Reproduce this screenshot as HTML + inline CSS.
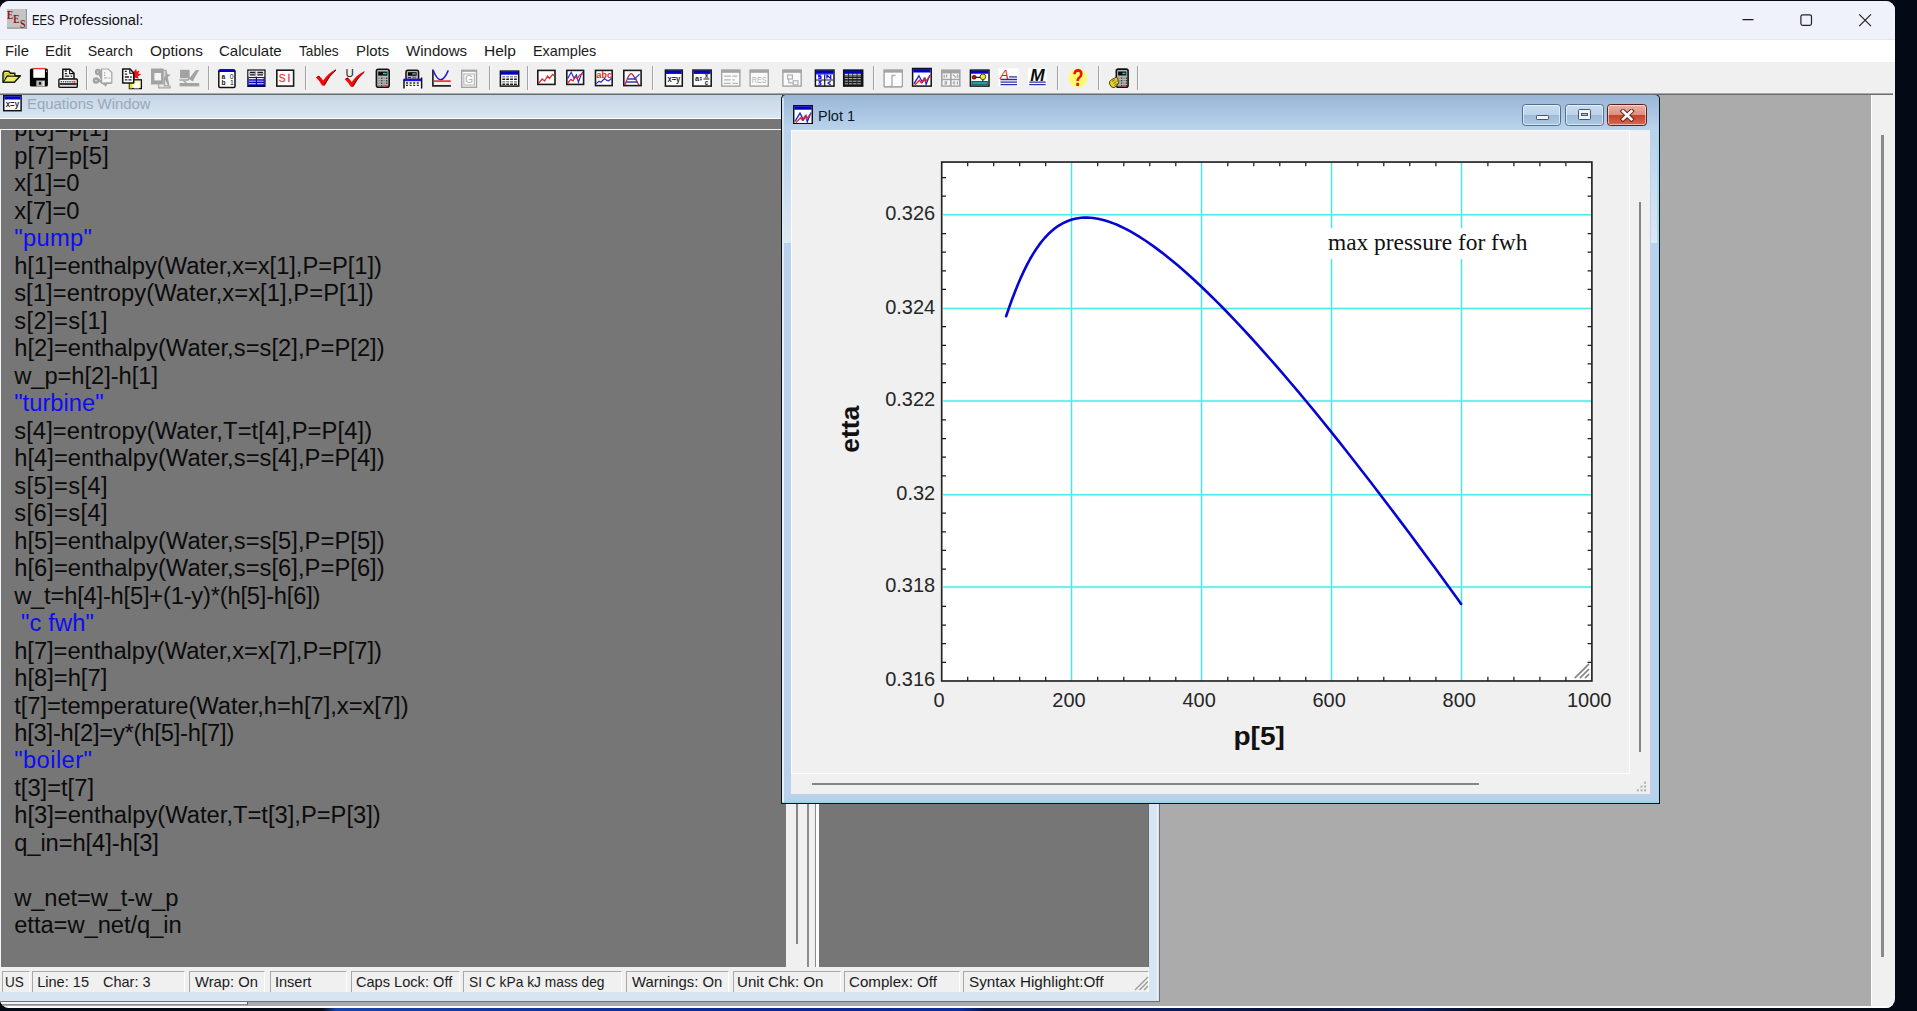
<!DOCTYPE html>
<html lang="en">
<head>
<meta charset="utf-8">
<title>EES Professional</title>
<style>
*{box-sizing:border-box;margin:0;padding:0}
html,body{width:1917px;height:1011px;overflow:hidden}
body{background:#040a15;font-family:"Liberation Sans",sans-serif;position:relative;color:#000}
div,span,svg,pre{position:absolute}
.lbl{white-space:pre;display:inline-block;transform-origin:0 50%}
#desk{left:0;top:1004px;width:1917px;height:7px;background:linear-gradient(90deg,#040a15 0,#040a15 322px,#1743a8 336px,#0e2f9a 600px,#0a2690 800px,#0c2c9c 960px,#06154e 985px,#081c60 1150px,#050f35 1300px,#071a58 1420px,#040a15 1500px)}
#win{left:0;top:1px;width:1895px;height:1007px;background:#f0f0f0;border-radius:9px 9px 9px 9px;overflow:hidden}
#tbar{left:0;top:0;width:1895px;height:39px;background:#eff2fa;border-bottom:1px solid #e4e6ec}
#mbar{left:0;top:39px;width:1895px;height:21.6px;background:#fff}
#tools{left:0;top:60.6px;width:1895px;height:31.4px;background:#f0f0f0}
#tline{left:0;top:91.6px;width:1893px;height:2.8px;background:linear-gradient(#d2d2d2,#8d9194 40%,#5c6368 85%,#687078);z-index:2}
#mdi{left:0;top:94px;width:1871px;height:911px;background:#ababab;overflow:hidden}
#vsb{left:1871px;top:94px;width:22px;height:913px;background:#f0f0f0;border-left:1px solid #fff}
#vsb i{position:absolute;left:9.2px;top:40px;width:3px;height:822px;background:#8a8a8a}
#hthumb{left:0;top:1000.6px;width:247.5px;height:3.4px;background:#f4f4f6;border-right:1.4px solid #5a5a5a;border-bottom:1px solid #8a8a8a;z-index:3}
#wbot{left:0;top:1005px;width:1895px;height:2px;background:#fdfdfd}
.sep{top:4.8px;width:2px;height:23.4px;background:#a3a3a3;border-right:1px solid #f8f8f8}


#eq{left:0;top:0;width:1159.7px;height:906.8px;background:#d7e4f1;border-right:1.4px solid #6e6e6e;border-bottom:1.6px solid #707070;overflow:hidden}
#eq:after{content:"";position:absolute;left:1157px;top:24px;width:1.3px;height:881px;background:#eaf1f8}
#eqtitle{left:0;top:0;width:1160px;height:23.2px;background:linear-gradient(#c6d5e5,#d9e6f2)}
#eqclient{left:0;top:23.2px;width:1148.9px;height:873.8px;background:#767676;border-top:1.2px solid #fff;overflow:hidden}
#eqtext{left:0;top:9.5px;width:786px;height:838.5px;background:#767676;border-top:1.3px solid #f4f4f4;border-left:1.5px solid #f4f4f4;overflow:hidden}
#eqtext pre{font-family:"Liberation Sans",sans-serif;color:#0b0b0b;white-space:pre}
#eqtext pre span{position:static}
#eqtext .c{color:#0d0df2}
#eqsb{left:785.7px;top:9.5px;width:21.6px;height:838.5px;background:#f0f0f0;border-top:1.4px solid #f8f8f8}
#eqsb i{position:absolute;left:10.5px;top:0;width:1.9px;height:814px;background:#858585}
#eqsplit{left:807.3px;top:9.5px;width:11.6px;height:838.5px;background:linear-gradient(90deg,#8c8c8c 0,#8c8c8c 2.1px,#f0f0f0 2.1px,#f0f0f0 7.7px,#8a8a8a 7.7px,#8a8a8a 8.7px,#fff 8.7px)}
#eqpane2{left:818.9px;top:9.5px;width:330px;height:838.5px;background:#767676;border-right:1.5px solid #6a6a6a}
#eqstat{left:0;top:848px;width:1148.9px;height:25px;background:#f0f0f0}
#eqstat .pn{top:4.2px;height:20.4px;border-top:1px solid #a8a8a8;border-left:1px solid #a8a8a8;border-right:1px solid #fff;background:#f0f0f0}

#pw{width:878.8px;height:710px;border:1px solid #0a0a0a;border-right:1.7px solid #06151c;border-bottom:1.7px solid #06151c;border-radius:5px 5px 0 0;
 background:linear-gradient(#9ab6d5 0,#a9c5e3 18px,#bcd4ec 36px,#b9d1ea 37px,#b9d1ea 702px,#a9d6ec 706px,#8fd4ec 708px);overflow:hidden}
#pw:after{content:"";position:absolute;right:0;top:30px;width:2.2px;height:676px;background:linear-gradient(90deg,#b0d6ee,#98d8f0)}
#pw:before{content:"";position:absolute;left:0;top:3px;width:1.6px;height:704px;background:linear-gradient(#cfe0f0,#eef5fb 300px,#e4f1f9)}
.glow{position:absolute;top:40px;width:7.4px;height:108px;background:linear-gradient(rgba(255,255,255,0),rgba(255,255,255,.22) 40%,rgba(255,255,255,.5))}
#pwtitle{left:0;top:0;width:876px;height:35px}
.wb{height:21.8px;border:1px solid #52708f;border-radius:3.5px;background:linear-gradient(#c9dcef 0,#bdd3ea 48%,#9fbbd8 52%,#adc8e2 100%);box-shadow:inset 0 0 0 1px rgba(255,255,255,.55)}
.wb i{position:absolute;display:block}
.wc{border-color:#5e1f19;background:linear-gradient(#eab0a2 0,#dd8f7f 48%,#c4442c 52%,#d8674b 100%)}
#pwclient{width:859.2px;height:663.6px;background:#f0f0f0}
#pwcanvas{left:0;top:0;width:838.6px;height:643.6px;background:#f0f0f0;border:1.3px solid #fdfdfd}
#pwvt{position:absolute;left:847.7px;top:71.6px;width:2.4px;height:550px;background:#858585}
#pwht{position:absolute;left:21.2px;top:652.9px;width:667.2px;height:2.4px;background:#858585}

</style>
</head>
<body>
<div id="desk"></div>
<div id="win">
<div id="tbar">
<svg style="left:7px;top:8.1px" width="19.8" height="19.6" viewBox="0 0 19.8 19.6" font-family="Liberation Serif, serif" font-weight="bold"><rect width="19.8" height="19.6" fill="#c3c5c4"/><path d="M0 19.1h19.8M19.4 0v19.6" stroke="#8a8c8b" stroke-width="1"/><text transform="translate(0.1 9.8) scale(.7 1)" font-size="13.2" fill="#8e1414">E</text><text transform="translate(6.3 13.6) scale(.7 1)" font-size="13.2" fill="#8e1414">E</text><text transform="translate(12.9 18.6) scale(.8 1)" font-size="12.6" fill="#961a1a">S</text></svg>
<span class="lbl" style="left:31.90px;top:9.67px;font-size:14.8px;line-height:18px;color:#111;transform:scaleX(0.7629);">EES</span>
<span class="lbl" style="left:59.03px;top:9.67px;font-size:14.8px;line-height:18px;color:#111;transform:scaleX(0.9852);">Professional:</span>
<svg style="left:1730px;top:0" width="165" height="39" viewBox="1730 1 165 39"><path d="M1742.5 19.6h11" stroke="#1a1a1a" stroke-width="1.1" fill="none"/><rect x="1800.9" y="14.8" width="10.6" height="10.6" rx="1.8" fill="none" stroke="#222" stroke-width="1.2"/><path d="M1859.2 14.4l11.8 11.8M1871 14.4l-11.8 11.8" stroke="#222" stroke-width="1.2" fill="none"/></svg>
</div>
<div id="mbar">
<span class="lbl" style="left:5.11px;top:2.58px;font-size:14.2px;line-height:17px;color:#1b1b1b;transform:scaleX(1.0463);">File</span>
<span class="lbl" style="left:45.20px;top:2.58px;font-size:14.2px;line-height:17px;color:#1b1b1b;transform:scaleX(1.0580);">Edit</span>
<span class="lbl" style="left:87.86px;top:2.58px;font-size:14.2px;line-height:17px;color:#1b1b1b;">Search</span>
<span class="lbl" style="left:149.61px;top:2.58px;font-size:14.2px;line-height:17px;color:#1b1b1b;transform:scaleX(1.0812);">Options</span>
<span class="lbl" style="left:219.25px;top:2.58px;font-size:14.2px;line-height:17px;color:#1b1b1b;transform:scaleX(1.0594);">Calculate</span>
<span class="lbl" style="left:298.93px;top:2.58px;font-size:14.2px;line-height:17px;color:#1b1b1b;transform:scaleX(0.9663);">Tables</span>
<span class="lbl" style="left:355.61px;top:2.58px;font-size:14.2px;line-height:17px;color:#1b1b1b;transform:scaleX(1.0492);">Plots</span>
<span class="lbl" style="left:406.36px;top:2.58px;font-size:14.2px;line-height:17px;color:#1b1b1b;transform:scaleX(1.0616);">Windows</span>
<span class="lbl" style="left:484.06px;top:2.58px;font-size:14.2px;line-height:17px;color:#1b1b1b;transform:scaleX(1.0955);">Help</span>
<span class="lbl" style="left:532.95px;top:2.58px;font-size:14.2px;line-height:17px;color:#1b1b1b;transform:scaleX(1.0164);">Examples</span>
</div>
<div id="tools">
<div class="sep" style="left:86px"></div>
<div class="sep" style="left:208px"></div>
<div class="sep" style="left:305px"></div>
<div class="sep" style="left:489px"></div>
<div class="sep" style="left:527px"></div>
<div class="sep" style="left:652px"></div>
<div class="sep" style="left:873px"></div>
<div class="sep" style="left:1057px"></div>
<div class="sep" style="left:1098px"></div>
<div class="sep" style="left:1137px"></div>
<svg style="left:0;top:0" width="1150" height="31" viewBox="0 61.6 1150 31" font-family="Liberation Sans, sans-serif"><g transform="translate(2.0 69.8)"><path d="M1 3.2L2.2 1h4.6l1.6 2h4.4v2.6h5.6L12.4 12H1z" fill="#eded6a" stroke="#1a1a1a" stroke-width="1.5" stroke-linejoin="round"/><path d="M1.4 11.6L5.2 5.8h12.6" fill="none" stroke="#1a1a1a" stroke-width="1.3"/><path d="M2.4 9.4V3.6h4l1.4 1.4h4v.6" fill="none" stroke="#b9b93a" stroke-width="1"/></g><g transform="translate(29.5 67.5)"><rect x="0.4" y="0.6" width="18" height="18" rx="1.6" fill="#050505"/><rect x="3.8" y="0" width="11.6" height="1.3" fill="#f03030"/><rect x="3.8" y="1.3" width="11.6" height="8.6" fill="#fff"/><rect x="6.8" y="12.6" width="8.6" height="6" fill="#b8b8b8"/><rect x="9.4" y="14.2" width="2.2" height="2.6" fill="#111"/><rect x="13.2" y="13.2" width="1.2" height="4.8" fill="#eee"/><rect x="16.6" y="2.6" width="1" height="1.6" fill="#bbb"/></g><g transform="translate(58.2 68.0)"><path d="M4.6 11V0.8h7.2l4 4V11z" fill="#fff" stroke="#111" stroke-width="1.5" stroke-linejoin="round"/><path d="M11.4 1v4.2h4" fill="none" stroke="#111" stroke-width="1.1"/><path d="M6.6 2.6h2M6.6 5.2h2.4M6.6 7.8h4.4M12.4 7.8h1.6" stroke="#222" stroke-width="1.3"/><rect x="0.7" y="10.6" width="18.4" height="8.4" rx="1" fill="#d8d8d8" stroke="#111" stroke-width="1.4"/><rect x="1.6" y="12" width="16.6" height="2.8" fill="#fff"/><path d="M2.4 13.4h12.2" stroke="#555" stroke-width="1.6" stroke-dasharray="1.4 .8"/><rect x="15.2" y="12.4" width="2" height="2" fill="#e33"/><rect x="1.4" y="14.8" width="17" height="1.6" fill="#111"/></g><g transform="translate(93.0 68.0)"><g fill="none" stroke="#a3a3a3" stroke-width="2.5"><circle cx="3" cy="12" r="2"/><circle cx="5" cy="3.6" r="1.9"/><path d="M4.8 11L13.6 17M6.4 5.2L9.6 11.6"/></g><path d="M8.6 0.6h6.6l3.6 3.4v10.6H8.6z" fill="#f6f6f6" stroke="#a3a3a3" stroke-width="1.2"/><path d="M11 4.4h1.2M11 7h1.2M11 9.6h3.4M15.6 9.6h1.4" stroke="#a3a3a3" stroke-width="1.2"/><path d="M11.6 14.8h7" stroke="#a3a3a3" stroke-width="1.6"/></g><g transform="translate(122.0 68.0)"><path d="M11 4l3.2-3.6L14.6 3l3-.6-1.4 2.6 3 1.2-3.4 1.6 1 2.6-3.4-1-1.6 2z" fill="#f41010"/><rect x="7.4" y="11.4" width="12" height="8.8" fill="#f6f6b8" stroke="#111" stroke-width="1.3"/><rect x="7.6" y="14" width="2.4" height="6" fill="#e6e600"/><rect x="11.8" y="14.2" width="5.4" height="5.8" fill="#fffff0"/><path d="M0.7 14.6V0.7h7.4l3.6 3.8v10.1z" fill="#fff" stroke="#111" stroke-width="1.5" stroke-linejoin="round"/><path d="M7.8 1v3.8h3.6" fill="none" stroke="#111" stroke-width="1.1"/><path d="M2.8 3h2M2.8 5.8h2.4M2.8 8.6h4.2M8.2 8.6h1.6M2.8 11.4h2.6M6.4 11.4h3.2" stroke="#222" stroke-width="1.3"/></g><g transform="translate(151.0 68.0)"><path d="M0 0h12.6v16H0z" fill="#a3a3a3"/><rect x="3.4" y="4.6" width="6.6" height="7.4" fill="#f4f4f4"/><path d="M12.6 1.4h2.8l1 4.4 3.4.6-3 2.2 1.8 9.4h-5.8z" fill="#a3a3a3"/><path d="M13.8 2.6v5.6" stroke="#e8e8e8" stroke-width="1"/><path d="M14.2 11.2l2.6 5.6h-2.6z" fill="#eaeaea"/><path d="M7.6 16v3.4h11.6v-2" fill="none" stroke="#a3a3a3" stroke-width="1.2"/><path d="M9.4 18.4h6.4" stroke="#c2c2c2" stroke-width="1.2" stroke-dasharray="1.4 1"/></g><g transform="translate(179.4 69.0)"><rect x="0.6" y="0.4" width="9.6" height="8.4" fill="#a3a3a3"/><path d="M10 8.8L16.4 0.6h3.4L13.6 11.4z" fill="#a3a3a3"/><path d="M0 10.6h8.4l1.6-1.8 3.6 2.6" fill="none" stroke="#a3a3a3" stroke-width="1.6"/><rect x="0.2" y="13.6" width="19.6" height="3.4" fill="#a3a3a3"/><path d="M4 11.4l3 2.2" stroke="#a3a3a3" stroke-width="1.4"/></g><g transform="translate(218.1 68.9)"><rect x="0.7" y="0.7" width="16.2" height="17.4" rx="1.2" fill="#fff" stroke="#111" stroke-width="1.5"/><path d="M0.6 2.2Q0.6 0 2.8 0h12q2.2 0 2.2 2.2v.6H.6z" fill="#0000c8"/><text x="3.4" y="9.4" font-size="6.6" font-weight="bold" fill="#111">a</text><text x="11.6" y="9.6" font-size="6.8" fill="#111">0</text><text x="3.4" y="16.2" font-size="6.6" font-weight="bold" fill="#111">b</text><text x="11.8" y="16.2" font-size="6.8" fill="#111">1</text></g><g transform="translate(247.2 69.0)"><rect x="0.7" y="0.7" width="17" height="16.2" fill="#fff" stroke="#111" stroke-width="1.4"/><rect x="1.4" y="1.4" width="15.6" height="5.6" fill="#f2ece8"/><path d="M2.6 2.9h5.6M10.2 2.9h5.6M2.6 5.4h5.6M10.2 5.4h5.6" stroke="#1a1a1a" stroke-width="1.3"/><path d="M1.4 4.1h15.6" stroke="#e05050" stroke-width=".5"/><rect x="1.2" y="7.6" width="16" height="9" fill="#0a0ac0"/><path d="M1.6 9.2h14.8M1.6 14.4h14.8" stroke="#e8e8ff" stroke-width="1.1"/><path d="M1.6 11.8h14.8" stroke="#8c8cf0" stroke-width="1.5"/><path d="M9.2 1.4v15.2" stroke="#0a0a90" stroke-width="1.2"/><path d="M9.2 1.4v6" stroke="#f2ece8" stroke-width="1.2"/><rect x="1" y="15.6" width="16.4" height="1.6" fill="#000080"/></g><g transform="translate(276.0 69.0)"><rect x="0.8" y="0.8" width="16.8" height="15.9" fill="#fff" stroke="#1a1a1a" stroke-width="1.6"/><text x="2.8" y="12.6" font-size="10.2" fill="#ea3c3c" stroke="#ea3c3c" stroke-width=".3">S</text><text x="11.4" y="12.6" font-size="10.2" fill="#ea3c3c" stroke="#ea3c3c" stroke-width=".3">I</text></g><g transform="translate(316.0 68.6)"><path d="M0 8.6L2.8 6.8Q5.4 8.6 7.1 11.6Q12 4 19.8 0.2L20 1Q13.6 6.8 8.8 16.6H6Q3.6 11.8 0 8.6z" fill="#f40a0a"/><path d="M8 16.4Q13 6.6 20 1" fill="none" stroke="#6a0808" stroke-width="1"/><path d="M0 8.6L2.8 6.8L4.4 8z" fill="#8a0606"/></g><g transform="translate(345.0 68.0)"><text x="4.8" y="8.6" font-size="11.6" fill="#222" text-anchor="middle">U</text><g transform="translate(-0.2 2.6)"><g transform="scale(.98 .95)"><path d="M0 8.6L2.8 6.8Q5.4 8.6 7.1 11.6Q12 4 19.8 0.2L20 1Q13.6 6.8 8.8 16.6H6Q3.6 11.8 0 8.6z" fill="#f40a0a"/><path d="M8 16.4Q13 6.6 20 1" fill="none" stroke="#6a0808" stroke-width="1"/><path d="M0 8.6L2.8 6.8L4.4 8z" fill="#8a0606"/></g></g></g><g transform="translate(375.6 68.0)"><rect x="0.8" y="0.8" width="12.8" height="18.0" rx="2" fill="#b4b4b4" stroke="#111" stroke-width="1.6"/><rect x="2.6" y="3.2" width="9.2" height="4" fill="#0a0a0a"/><rect x="7.4" y="4.4" width="3.6" height="1.5" fill="#2cc"/><rect x="2.8" y="9.2" width="1.5" height="1.3" fill="#8a8a8a"/><rect x="5.3" y="9.2" width="1.5" height="1.3" fill="#333"/><rect x="7.8" y="9.2" width="1.5" height="1.3" fill="#8a8a8a"/><rect x="10.3" y="9.2" width="1.5" height="1.3" fill="#333"/><rect x="2.8" y="11.7" width="1.5" height="1.3" fill="#8a8a8a"/><rect x="5.3" y="11.7" width="1.5" height="1.3" fill="#333"/><rect x="7.8" y="11.7" width="1.5" height="1.3" fill="#8a8a8a"/><rect x="10.3" y="11.7" width="1.5" height="1.3" fill="#333"/><rect x="2.8" y="14.2" width="1.5" height="1.3" fill="#8a8a8a"/><rect x="5.3" y="14.2" width="1.5" height="1.3" fill="#333"/><rect x="7.8" y="14.2" width="1.5" height="1.3" fill="#8a8a8a"/><rect x="10.3" y="14.2" width="1.5" height="1.3" fill="#333"/><rect x="2.8" y="16.7" width="1.5" height="1.3" fill="#8a8a8a"/><rect x="5.3" y="16.7" width="1.5" height="1.3" fill="#333"/><rect x="7.8" y="16.7" width="1.5" height="1.3" fill="#8a8a8a"/><rect x="10.3" y="16.7" width="1.5" height="1.3" fill="#333"/><rect x="7.6000000000000005" y="16.6" width="3.8" height="1.5" fill="#e44"/></g><g transform="translate(403.0 69.0)"><rect x="3" y="0.8" width="12.6" height="10" rx="1.8" fill="#b4b4b4" stroke="#111" stroke-width="1.5"/><rect x="5" y="2.8" width="8.6" height="3.6" fill="#0a0a0a"/><rect x="9.4" y="3.8" width="3.4" height="1.4" fill="#2cc"/><path d="M5 8.2h3" stroke="#333" stroke-width="1.4"/><path d="M9.4 8.2h3.6" stroke="#e33" stroke-width="1.5"/><rect x="1" y="9.6" width="17.6" height="9.4" fill="#fff"/><rect x="0.6" y="9.2" width="18.4" height="2.6" fill="#1414e8"/><path d="M1 10v9M18.6 8v11" stroke="#111" stroke-width="1.5"/><path d="M3 13.6h14M3 16h14" stroke="#222" stroke-width="1.4" stroke-dasharray="2 1.6"/></g><g transform="translate(431.9 69.0)"><path d="M1 0v16.4h18" fill="none" stroke="#222" stroke-width="1.7"/><path d="M1.4 1.2Q8.6 19.6 16.4 1" fill="none" stroke="#1a1ad8" stroke-width="1.5"/><path d="M1.8 11.7h17" stroke="#ea3a3a" stroke-width="1.6"/></g><g transform="translate(461.0 69.2)"><rect x="0.7" y="0.7" width="14.8" height="17" fill="#fbfbfb" stroke="#a3a3a3" stroke-width="1.4"/><rect x="0.7" y="0.4" width="14.8" height="1.8" fill="#a3a3a3"/><rect x="2.8" y="4.4" width="10.6" height="11" fill="none" stroke="#bdbdbd" stroke-width="1.2"/><text x="8.1" y="13.8" font-size="10.4" fill="#b0b0b0" text-anchor="middle">G</text></g><g transform="translate(499.7 70.0)"><rect x="0.7" y="0.7" width="18.3" height="15.0" fill="#fff" stroke="#111" stroke-width="1.5"/><rect x="1.3" y="1.3" width="17.1" height="3" fill="#0000c8"/><rect x="2.6" y="5.6" width="2.9" height="1.5" fill="#8c8c8c"/><rect x="6.5" y="5.6" width="2.9" height="1.5" fill="#8c8c8c"/><rect x="10.4" y="5.6" width="2.9" height="1.5" fill="#8c8c8c"/><rect x="14.3" y="5.6" width="2.9" height="1.5" fill="#8c8c8c"/><rect x="2.6" y="8.1" width="2.9" height="1.5" fill="#222"/><rect x="6.5" y="8.1" width="2.9" height="1.5" fill="#222"/><rect x="10.4" y="8.1" width="2.9" height="1.5" fill="#222"/><rect x="14.3" y="8.1" width="2.9" height="1.5" fill="#222"/><rect x="2.6" y="10.6" width="2.9" height="1.5" fill="#8c8c8c"/><rect x="6.5" y="10.6" width="2.9" height="1.5" fill="#8c8c8c"/><rect x="10.4" y="10.6" width="2.9" height="1.5" fill="#8c8c8c"/><rect x="14.3" y="10.6" width="2.9" height="1.5" fill="#8c8c8c"/><rect x="2.6" y="13.1" width="2.9" height="1.5" fill="#222"/><rect x="6.5" y="13.1" width="2.9" height="1.5" fill="#222"/><rect x="10.4" y="13.1" width="2.9" height="1.5" fill="#222"/><rect x="14.3" y="13.1" width="2.9" height="1.5" fill="#222"/></g><g transform="translate(537.0 69.2)"><rect x="0.8" y="0.8" width="17.2" height="14.0" fill="#fff" stroke="#1a1a1a" stroke-width="1.6"/><path d="M1.8 13.6L5.2 9.4L7.6 11.4L10.6 6.4L12.6 8.8L15.6 4.8L17.2 6.2" fill="none" stroke="#e52828" stroke-width="1.3"/></g><g transform="translate(566.0 69.2)"><rect x="0.8" y="0.8" width="16.8" height="14.0" fill="#fff" stroke="#1a1a1a" stroke-width="1.6"/><path d="M1.6 9L5.2 2.6L8 8.6L10.4 5.2L12.4 12.6L15.4 4.4L17 2.4" fill="none" stroke="#2a2ae0" stroke-width="1.2"/><path d="M1.8 13.4L4.8 9.8L7 11.2L9.6 7.2L11.4 9.2L13.6 5.4L16.8 4.4" fill="none" stroke="#e52828" stroke-width="1.2"/></g><g transform="translate(594.7 69.2)"><rect x="0.8" y="0.8" width="16.7" height="15.2" fill="#fff" stroke="#1a1a1a" stroke-width="1.6"/><text x="9.6" y="8.4" font-size="9" font-weight="bold" fill="#e52828" text-anchor="middle" textLength="15.4" lengthAdjust="spacingAndGlyphs">abc</text><path d="M1.4 14L4.4 11.6L6.2 12.6L9.8 9L12.2 10.8L14 11.2L17 8.6" fill="none" stroke="#2a2ae0" stroke-width="1.2"/></g><g transform="translate(623.0 69.2)"><rect x="0.8" y="0.8" width="17.3" height="15.2" fill="#fff" stroke="#1a1a1a" stroke-width="1.6"/><path d="M2 15.4Q7 0 10 5.6Q13 10 16 15.6" fill="none" stroke="#c82040" stroke-width="1.3"/><path d="M4.6 9.4h9M3.4 12.4h11.4" stroke="#3a3ab8" stroke-width="1.3"/><path d="M11 9.6L16.6 4.6" stroke="#3a3ab8" stroke-width="1.2"/></g><g transform="translate(664.7 69.0)"><rect x="0.7" y="0.7" width="16.9" height="16.0" fill="#fff" stroke="#111" stroke-width="1.5"/><rect x="1.3" y="1.3" width="15.7" height="3.2" fill="#0000c8"/><text x="9.2" y="12.6" font-size="8.8" text-anchor="middle" font-weight="bold" fill="#2a2a2a" font-family="Liberation Sans, sans-serif" textLength="12.9" lengthAdjust="spacingAndGlyphs">x=y</text></g><g transform="translate(692.2 69.0)"><rect x="0.7" y="0.7" width="18.3" height="16.0" fill="#fff" stroke="#111" stroke-width="1.5"/><rect x="1.3" y="1.3" width="17.1" height="3.2" fill="#0000c8"/><text x="2.8" y="11.6" font-size="7.4" font-weight="bold" fill="#222">a</text><path d="M7.6 8.4h2.2M7.6 10.4h2.2" stroke="#222" stroke-width="1"/><path d="M11.2 9.6h6" stroke="#222" stroke-width="1.1"/><text x="14.3" y="8.4" font-size="6.4" font-weight="bold" fill="#222" text-anchor="middle">x</text><text x="14.3" y="15.2" font-size="6.4" font-weight="bold" fill="#222" text-anchor="middle">c</text></g><g transform="translate(721.0 69.0)"><rect x="0.7" y="0.7" width="18.2" height="16.0" fill="#fafafa" stroke="#a3a3a3" stroke-width="1.4"/><rect x="0.4" y="0.4" width="18.8" height="3" fill="#a3a3a3"/><path d="M3 6.8h6.8M11.4 6.8h4.8M3 10.4h6.8M11.4 10.4h2.4M3 14h6.8M11.4 14h5.6" stroke="#b6b6b6" stroke-width="1.3"/></g><g transform="translate(749.4 69.0)"><rect x="0.7" y="0.7" width="18.2" height="16.0" fill="#fafafa" stroke="#a3a3a3" stroke-width="1.4"/><rect x="0.4" y="0.4" width="18.8" height="3" fill="#a3a3a3"/><text x="9.8" y="13.6" font-size="8.8" fill="#b4b4b4" text-anchor="middle" textLength="15" lengthAdjust="spacingAndGlyphs">RES</text></g><g transform="translate(782.2 69.0)"><rect x="0.7" y="0.7" width="18.3" height="16.0" fill="#fafafa" stroke="#a3a3a3" stroke-width="1.4"/><rect x="0.4" y="0.4" width="18.9" height="3" fill="#a3a3a3"/><rect x="5.4" y="5.6" width="4.8" height="4" fill="none" stroke="#b0b0b0" stroke-width="1.2"/><rect x="11" y="11.4" width="4.8" height="4" fill="none" stroke="#b0b0b0" stroke-width="1.2"/><path d="M6.6 9.6v3.8h4.4" fill="none" stroke="#b0b0b0" stroke-width="1.2"/></g><g transform="translate(814.7 69.0)"><rect x="0.7" y="0.7" width="18.6" height="16.0" fill="#fff" stroke="#111" stroke-width="1.5"/><rect x="1.3" y="1.3" width="17.4" height="3.2" fill="#0000c8"/><path d="M10 4.4v12.4M1.2 10.6h17.6" stroke="#1a1a1a" stroke-width="1.2"/><path d="M6.6 5.6H4v1.6h2.2v1.8H3.6M12.2 9.2V5.6l3.8 3.6V5.6M3.8 11.8h2.4l-1.4 1.6q1.6 0 1.4 1.4-.4 1-2.4.8M16 11.8l-2.6 1.9 2.6 1.9" fill="none" stroke="#1414e0" stroke-width="1.3"/><rect x="1.3" y="4.4" width="17.4" height=".9" fill="#5a5af0"/></g><g transform="translate(843.0 69.0)"><rect x="0.7" y="0.7" width="19.0" height="16.0" fill="#1a1a1a" stroke="#111" stroke-width="1.5"/><rect x="1.3" y="1.3" width="17.8" height="3.4" fill="#0000c8"/><path d="M1.8 6.6h16.8M1.8 9.2h16.8M1.8 11.8h16.8M1.8 14.4h16.8" stroke="#cfcfcf" stroke-width=".9" stroke-dasharray="3.4 .8"/><path d="M1.8 4.9h16.8" stroke="#e8e8ff" stroke-width="1" stroke-dasharray="3.4 .8"/></g><g transform="translate(883.4 69.0)"><rect x="0.7" y="0.7" width="18.2" height="16.2" fill="#fafafa" stroke="#a3a3a3" stroke-width="1.4"/><rect x="0.4" y="0.4" width="18.8" height="3" fill="#a3a3a3"/><rect x="1.6" y="3.4" width="16.4" height="13.4" fill="#fdfdfd"/><path d="M5.4 17h3.2V6.2h3.6" fill="none" stroke="#b0b0b0" stroke-width="1.5"/><path d="M0.7 17.6h18" stroke="#a8a8a8" stroke-width="1.5"/></g><g transform="translate(911.9 67.4)"><rect x="0.7" y="0.7" width="18.6" height="17.6" fill="#fff" stroke="#111" stroke-width="1.5"/><rect x="1.3" y="1.3" width="17.4" height="3.4" fill="#0000c8"/><path d="M2 16L7 8.0L10.5 14.5L13 10.5L14.2 16.5L18 7.2" stroke="#1d1de0" stroke-width="1.3" fill="none"/><path d="M3 17.2L7.5 12.5L9.5 15L12.2 10.5L13.4 13.7L17.8 8.6" stroke="#e82020" stroke-width="1.3" fill="none"/></g><g transform="translate(941.0 69.0)"><rect x="0" y="0" width="19.6" height="17.4" fill="#a3a3a3"/><rect x="1.6" y="4" width="7.4" height="5.4" fill="#f4f4f4"/><rect x="10.6" y="4" width="7.4" height="5.4" fill="#f4f4f4"/><rect x="1.6" y="10.8" width="7.4" height="5.2" fill="#f4f4f4"/><rect x="10.6" y="10.8" width="7.4" height="5.2" fill="#f4f4f4"/><path d="M3.2 5.4v3M5.6 5.2v3M12 5.2l3 3M16.6 5v3.4M3.4 12.4h2v2h-2M13.6 12l-1.2 1.6 1.4 1.2M16.4 12v3" fill="none" stroke="#a3a3a3" stroke-width="1.3"/></g><g transform="translate(969.7 69.0)"><rect x="0.7" y="0.7" width="18.6" height="16.0" fill="#fff" stroke="#111" stroke-width="1.5"/><rect x="1.3" y="1.3" width="17.4" height="3" fill="#0000c8"/><rect x="2.2" y="12" width="15.4" height="3.4" fill="#22a0a0" stroke="#0a4a4a" stroke-width=".9"/><path d="M5 8h6M13.2 9v3" stroke="#222" stroke-width="1.2"/><rect x="2.6" y="6.2" width="3.6" height="3.4" rx="1" fill="#c81414" stroke="#400" stroke-width=".8"/><circle cx="13.2" cy="7.4" r="2.8" fill="#f4f020" stroke="#333" stroke-width=".9"/></g><g transform="translate(998.5 67.9)"><rect width="20" height="18" fill="#fff"/><text x="1.4" y="10.2" font-size="13.4" font-style="italic" fill="#e02020">A</text><path d="M10.6 8.6h8M2 11.2h16.6M2 13.8h16.6M2 16.4h16.6" stroke="#2c2ca8" stroke-width="1.3"/></g><g transform="translate(1027.9 67.9)"><rect width="18.7" height="18" fill="#fff"/><text x="9.6" y="12.2" font-size="16" font-style="italic" font-weight="bold" fill="#0a0a0a" text-anchor="middle" textLength="14.4" lengthAdjust="spacingAndGlyphs">M</text><path d="M1.4 13.8h16.4M1.4 16.4h16.4" stroke="#2c2ca8" stroke-width="1.3"/></g><defs><radialGradient id="yq"><stop offset="0" stop-color="#ffff5a"/><stop offset=".75" stop-color="#fbfb78"/><stop offset="1" stop-color="#f6f6a8" stop-opacity="0"/></radialGradient></defs><circle cx="1078" cy="77.6" r="10.8" fill="url(#yq)"/><text transform="translate(1078 86) scale(.78 1)" font-size="23.2" font-weight="bold" fill="#e81010" text-anchor="middle">?</text><g transform="translate(1108.5 67.9)"><g transform="translate(7.0 0.0)"><rect x="0.8" y="0.8" width="11.8" height="18.2" rx="2" fill="#b4b4b4" stroke="#111" stroke-width="1.6"/><rect x="2.6" y="3.2" width="8.2" height="4" fill="#0a0a0a"/><rect x="6.9" y="4.4" width="3.1" height="1.5" fill="#2cc"/><rect x="2.8" y="9.2" width="1.5" height="1.3" fill="#8a8a8a"/><rect x="5.3" y="9.2" width="1.5" height="1.3" fill="#333"/><rect x="7.8" y="9.2" width="1.5" height="1.3" fill="#8a8a8a"/><rect x="10.3" y="9.2" width="1.5" height="1.3" fill="#333"/><rect x="2.8" y="11.7" width="1.5" height="1.3" fill="#8a8a8a"/><rect x="5.3" y="11.7" width="1.5" height="1.3" fill="#333"/><rect x="7.8" y="11.7" width="1.5" height="1.3" fill="#8a8a8a"/><rect x="10.3" y="11.7" width="1.5" height="1.3" fill="#333"/><rect x="2.8" y="14.2" width="1.5" height="1.3" fill="#8a8a8a"/><rect x="5.3" y="14.2" width="1.5" height="1.3" fill="#333"/><rect x="7.8" y="14.2" width="1.5" height="1.3" fill="#8a8a8a"/><rect x="10.3" y="14.2" width="1.5" height="1.3" fill="#333"/><rect x="2.8" y="16.7" width="1.5" height="1.3" fill="#8a8a8a"/><rect x="5.3" y="16.7" width="1.5" height="1.3" fill="#333"/><rect x="7.8" y="16.7" width="1.5" height="1.3" fill="#8a8a8a"/><rect x="10.3" y="16.7" width="1.5" height="1.3" fill="#333"/><rect x="7.1000000000000005" y="16.6" width="3.3" height="1.5" fill="#e44"/></g><path d="M1 15.6Q0.4 12.6 3 11.4L7.6 9Q9.8 9.6 9.4 12L10 14.4Q9 18 5.6 19.4Q2.4 19.6 1 15.6z" fill="#e6d628" stroke="#3a3208" stroke-width=".9"/><path d="M3.4 13.4l3-2.2M4.8 15.4l3.2-2.4M5.8 17.4l3-2" stroke="#5a4c0a" stroke-width=".8"/></g></svg>
</div>
<div id="tline"></div>
<div id="vsb"><i></i></div>
<div id="wbot"></div>
<div id="hthumb"></div>
<div id="mdi">
<div id="eq">
<div id="eqtitle">
<svg style="left:3.0px;top:0.4px" width="18.8" height="16.4" viewBox="0 0 18.8 16.4"><rect x="0.7" y="0.7" width="17.4" height="15.0" fill="#fff" stroke="#111" stroke-width="1.5"/><rect x="1.3" y="1.3" width="16.2" height="3.2" fill="#0000c8"/><text x="9.4" y="11.6" font-size="8.6" text-anchor="middle" font-weight="bold" fill="#2a2a2a" font-family="Liberation Sans, sans-serif" textLength="13.4" lengthAdjust="spacingAndGlyphs">x=y</text></svg>
<span class="lbl" style="left:26.51px;top:0.20px;font-size:15px;line-height:18px;color:#9aa8b8;transform:scaleX(0.9953);">Equations Window</span>
</div>
<div id="eqclient">
<div id="eqtext">
<pre style="left:13.2px;top:-14.35px;font-size:23.74px;line-height:27.48px"><span style="letter-spacing:0.200px">p[6]=p[1]</span>
<span style="letter-spacing:0.200px">p[7]=p[5]</span>
x[1]=0
x[7]=0
<span class="c" style="letter-spacing:0.320px">"pump"</span>
<span style="letter-spacing:-0.042px">h[1]=enthalpy(Water,x=x[1],P=P[1])</span>
<span style="letter-spacing:0.066px">s[1]=entropy(Water,x=x[1],P=P[1])</span>
<span style="letter-spacing:0.375px">s[2]=s[1]</span>
<span style="letter-spacing:0.039px">h[2]=enthalpy(Water,s=s[2],P=P[2])</span>
<span style="letter-spacing:-0.058px">w_p=h[2]-h[1]</span>
<span class="c">"turbine"</span>
<span style="letter-spacing:0.103px">s[4]=entropy(Water,T=t[4],P=P[4])</span>
<span style="letter-spacing:0.039px">h[4]=enthalpy(Water,s=s[4],P=P[4])</span>
<span style="letter-spacing:0.375px">s[5]=s[4]</span>
<span style="letter-spacing:0.375px">s[6]=s[4]</span>
<span style="letter-spacing:0.039px">h[5]=enthalpy(Water,s=s[5],P=P[5])</span>
<span style="letter-spacing:0.039px">h[6]=enthalpy(Water,s=s[6],P=P[6])</span>
<span style="letter-spacing:-0.210px">w_t=h[4]-h[5]+(1-y)*(h[5]-h[6])</span>
<span class="c" style="letter-spacing:0.143px"> "c fwh"</span>
<span style="letter-spacing:-0.042px">h[7]=enthalpy(Water,x=x[7],P=P[7])</span>
h[8]=h[7]
<span style="letter-spacing:-0.033px">t[7]=temperature(Water,h=h[7],x=x[7])</span>
<span style="letter-spacing:-0.218px">h[3]-h[2]=y*(h[5]-h[7])</span>
<span class="c" style="letter-spacing:0.400px">"boiler"</span>
t[3]=t[7]
h[3]=enthalpy(Water,T=t[3],P=P[3])
<span style="letter-spacing:-0.085px">q_in=h[4]-h[3]</span>

<span style="letter-spacing:-0.117px">w_net=w_t-w_p</span>
<span style="letter-spacing:-0.050px">etta=w_net/q_in</span></pre>
</div>
<div id="eqsb"><i></i></div>
<div id="eqsplit"></div>
<div id="eqpane2"></div>
<div id="eqstat">
<div class="pn" style="left:2.0px;width:28.0px"></div>
<span class="lbl" style="left:5.28px;top:5.94px;font-size:14.6px;line-height:18px;color:#1b1b1b;transform:scaleX(0.9276);">US</span>
<div class="pn" style="left:32.4px;width:152.2px"></div>
<span class="lbl" style="left:37.13px;top:5.94px;font-size:14.6px;line-height:18px;color:#1b1b1b;">Line: 15</span>
<div class="pn" style="left:188.6px;width:76.8px"></div>
<span class="lbl" style="left:194.76px;top:5.94px;font-size:14.6px;line-height:18px;color:#1b1b1b;transform:scaleX(1.0107);">Wrap: On</span>
<div class="pn" style="left:269.8px;width:77.4px"></div>
<span class="lbl" style="left:274.89px;top:5.94px;font-size:14.6px;line-height:18px;color:#1b1b1b;">Insert</span>
<div class="pn" style="left:351.2px;width:108.8px"></div>
<span class="lbl" style="left:355.97px;top:5.94px;font-size:14.6px;line-height:18px;color:#1b1b1b;">Caps Lock: Off</span>
<div class="pn" style="left:463.4px;width:158.3px"></div>
<span class="lbl" style="left:468.68px;top:5.94px;font-size:14.6px;line-height:18px;color:#1b1b1b;transform:scaleX(0.9435);">SI C kPa kJ mass deg</span>
<div class="pn" style="left:626.0px;width:102.5px"></div>
<span class="lbl" style="left:632.26px;top:5.94px;font-size:14.6px;line-height:18px;color:#1b1b1b;transform:scaleX(1.0188);">Warnings: On</span>
<div class="pn" style="left:732.5px;width:108.5px"></div>
<span class="lbl" style="left:737.17px;top:5.94px;font-size:14.6px;line-height:18px;color:#1b1b1b;transform:scaleX(1.0351);">Unit Chk: On</span>
<div class="pn" style="left:844.4px;width:115.6px"></div>
<span class="lbl" style="left:849.24px;top:5.94px;font-size:14.6px;line-height:18px;color:#1b1b1b;transform:scaleX(1.0363);">Complex: Off</span>
<div class="pn" style="left:963.3px;width:185.7px"></div>
<span class="lbl" style="left:968.61px;top:5.94px;font-size:14.6px;line-height:18px;color:#1b1b1b;transform:scaleX(1.0456);">Syntax Highlight:Off</span>
<span class="lbl" style="left:102.57px;top:5.94px;font-size:14.6px;line-height:18px;color:#1b1b1b;transform:scaleX(0.9935);">Char: 3</span>
<svg style="left:1134px;top:9px" width="15" height="15" viewBox="0 0 15 15"><path d="M1 14L14 1M5.5 14L14 5.5M10 14l4-4" stroke="#9a9a9a" stroke-width="1.3" fill="none"/></svg>
</div>
</div>
</div>
<div id="pw" style="left:781.2px;top:-1.0px">
<i class="glow" style="left:1.6px"></i><i class="glow" style="left:869px"></i>
<div id="pwtitle">
<svg style="left:11.2px;top:9.8px" width="20" height="19.4" viewBox="0 0 20 19.4"><rect x="0.7" y="0.7" width="18.6" height="18.0" fill="#fff" stroke="#111" stroke-width="1.5"/><rect x="1.3" y="1.3" width="17.4" height="3.4" fill="#0000c8"/><path d="M2 16.4L7 8.1L10.5 14.899999999999999L13 10.7L14.2 16.9L18 7.4" stroke="#1d1de0" stroke-width="1.3" fill="none"/><path d="M3 17.599999999999998L7.5 12.8L9.5 15.399999999999999L12.2 10.7L13.4 14.0L17.8 8.7" stroke="#e82020" stroke-width="1.3" fill="none"/></svg>
<span class="lbl" style="left:35.94px;top:12.23px;font-size:15.2px;line-height:18px;color:#0c1626;transform:scaleX(0.9513);">Plot 1</span>
<div class="wb" style="left:740.3px;top:9.4px;width:39px"><i style="left:12.2px;top:9.6px;width:13px;height:4.8px;background:#f0f3f8;border:1px solid #45556a;border-radius:1.2px"></i></div>
<div class="wb" style="left:782.9px;top:9.4px;width:39.2px"><i style="left:11.6px;top:4px;width:13.4px;height:10.8px;background:#f0f3f8;border:1px solid #45556a;border-radius:1.5px"></i><i style="left:15px;top:7.6px;width:6.6px;height:3.4px;background:#a9c2dc;border:1px solid #45556a"></i></div>
<div class="wb wc" style="left:825.3px;top:9.4px;width:39.4px"><svg style="left:12px;top:3.4px" width="15" height="13" viewBox="0 0 15 13"><path d="M3 2.2L11.4 10.2M11.4 2.2L3 10.2" stroke="#5b2219" stroke-width="4.6" stroke-linecap="square" fill="none"/><path d="M3 2.2L11.4 10.2M11.4 2.2L3 10.2" stroke="#f6f6f6" stroke-width="2.7" stroke-linecap="square" fill="none"/></svg></div>
</div>
<div id="pwclient" style="left:8.8px;top:35.0px">
<div id="pwcanvas"></div>
<i id="pwvt"></i><i id="pwht"></i>
<svg id="plot" style="left:0;top:0" width="859.2" height="663.6" viewBox="791.0 130.0 859.2 663.6" font-family="Liberation Sans, sans-serif">
<rect x="1644.0" y="781.7" width="2.1" height="2.1" fill="#b4b4b4"/><rect x="1640.5" y="785.5" width="2.1" height="2.1" fill="#b4b4b4"/><rect x="1644.0" y="785.5" width="2.1" height="2.1" fill="#b4b4b4"/><rect x="1636.8" y="789.3" width="2.1" height="2.1" fill="#b4b4b4"/><rect x="1640.5" y="789.3" width="2.1" height="2.1" fill="#b4b4b4"/><rect x="1644.0" y="789.3" width="2.1" height="2.1" fill="#b4b4b4"/>
<rect x="941.7" y="162.05" width="650.2" height="518.95" fill="#fff"/>
<path d="M1071.5 162.05V681.0M1201.5 162.05V681.0M1331.5 162.05V681.0M1461.5 162.05V681.0" stroke="#2fdede" stroke-width="1.25" fill="none"/><path d="M943.3000000000001 214.85H1591.9M943.3000000000001 308.5H1591.9M943.3000000000001 400.9H1591.9M943.3000000000001 494.7H1591.9M943.3000000000001 587.0H1591.9" stroke="#35e6e6" stroke-width="1.5" fill="none"/>
<path d="M1071.5 162.05V681.0M1201.5 162.05V681.0M1331.5 162.05V681.0M1461.5 162.05V681.0M943.3000000000001 214.85H1591.9M943.3000000000001 308.5H1591.9M943.3000000000001 400.9H1591.9M943.3000000000001 494.7H1591.9M943.3000000000001 587.0H1591.9" stroke="#9ff4f4" stroke-width="3" stroke-opacity=".28" fill="none"/>
<rect x="1326.5" y="228.2" width="206" height="30.8" fill="#fff"/>
<path d="M967.7 162.05v4.2M967.7 681.0v-4.2M993.7 162.05v4.2M993.7 681.0v-4.2M1019.7 162.05v4.2M1019.7 681.0v-4.2M1045.7 162.05v4.2M1045.7 681.0v-4.2M1097.7 162.05v4.2M1097.7 681.0v-4.2M1123.8 162.05v4.2M1123.8 681.0v-4.2M1149.8 162.05v4.2M1149.8 681.0v-4.2M1175.8 162.05v4.2M1175.8 681.0v-4.2M1227.8 162.05v4.2M1227.8 681.0v-4.2M1253.8 162.05v4.2M1253.8 681.0v-4.2M1279.8 162.05v4.2M1279.8 681.0v-4.2M1305.8 162.05v4.2M1305.8 681.0v-4.2M1357.8 162.05v4.2M1357.8 681.0v-4.2M1383.8 162.05v4.2M1383.8 681.0v-4.2M1409.8 162.05v4.2M1409.8 681.0v-4.2M1435.9 162.05v4.2M1435.9 681.0v-4.2M1487.9 162.05v4.2M1487.9 681.0v-4.2M1513.9 162.05v4.2M1513.9 681.0v-4.2M1539.9 162.05v4.2M1539.9 681.0v-4.2M1565.9 162.05v4.2M1565.9 681.0v-4.2M941.7 662.4h4.3M1591.9 662.4h-4.3M941.7 643.7h4.3M1591.9 643.7h-4.3M941.7 625.1h4.3M1591.9 625.1h-4.3M941.7 606.4h4.3M1591.9 606.4h-4.3M941.7 569.1h4.3M1591.9 569.1h-4.3M941.7 550.5h4.3M1591.9 550.5h-4.3M941.7 531.8h4.3M1591.9 531.8h-4.3M941.7 513.2h4.3M1591.9 513.2h-4.3M941.7 475.9h4.3M1591.9 475.9h-4.3M941.7 457.2h4.3M1591.9 457.2h-4.3M941.7 438.6h4.3M1591.9 438.6h-4.3M941.7 420.0h4.3M1591.9 420.0h-4.3M941.7 382.7h4.3M1591.9 382.7h-4.3M941.7 364.0h4.3M1591.9 364.0h-4.3M941.7 345.4h4.3M1591.9 345.4h-4.3M941.7 326.7h4.3M1591.9 326.7h-4.3M941.7 289.4h4.3M1591.9 289.4h-4.3M941.7 270.8h4.3M1591.9 270.8h-4.3M941.7 252.1h4.3M1591.9 252.1h-4.3M941.7 233.5h4.3M1591.9 233.5h-4.3M941.7 196.2h4.3M1591.9 196.2h-4.3M941.7 177.6h4.3M1591.9 177.6h-4.3" stroke="#1a1a1a" stroke-width="1.25" fill="none"/>
<polyline points="1006.1,316.2 1009.1,307.6 1012.1,299.3 1015.1,291.5 1018.1,284.1 1021.1,277.1 1024.1,270.6 1027.1,264.6 1030.1,259.0 1033.1,253.9 1036.1,249.2 1039.1,244.9 1042.1,241.0 1045.1,237.5 1048.1,234.3 1051.1,231.5 1054.1,228.9 1057.1,226.7 1060.1,224.8 1063.1,223.1 1066.1,221.7 1069.1,220.5 1072.1,219.5 1075.1,218.8 1078.1,218.2 1081.1,217.8 1084.1,217.6 1087.1,217.6 1090.1,217.8 1093.1,218.0 1096.1,218.5 1099.1,219.0 1102.1,219.7 1105.1,220.5 1108.1,221.4 1111.1,222.5 1114.1,223.6 1117.1,224.8 1120.1,226.2 1123.1,227.6 1126.1,229.1 1129.1,230.7 1130.0,231.2 1138.0,235.8 1146.0,241.0 1154.0,246.6 1162.0,252.6 1170.0,258.9 1178.0,265.6 1186.0,272.5 1194.0,279.8 1202.0,287.2 1210.0,295.0 1218.0,302.9 1226.0,311.0 1234.0,319.3 1242.0,327.8 1250.0,336.5 1258.0,345.3 1266.0,354.3 1274.0,363.4 1282.0,372.6 1290.0,382.0 1298.0,391.4 1306.0,401.0 1314.0,410.7 1322.0,420.5 1330.0,430.4 1338.0,440.4 1346.0,450.5 1354.0,460.7 1362.0,471.0 1370.0,481.3 1378.0,491.7 1386.0,502.2 1394.0,512.8 1402.0,523.4 1410.0,534.1 1418.0,544.9 1426.0,555.7 1434.0,566.6 1442.0,577.5 1450.0,588.5 1458.0,599.6 1461.1,603.9" fill="none" stroke="#0606d0" stroke-width="2.6" stroke-linejoin="round" stroke-linecap="round"/>
<rect x="941.7" y="162.05" width="650.2" height="518.95" fill="none" stroke="#262626" stroke-width="1.7"/>
<path d="M1575.2 677.7L1588.6 664.4M1580.4 677.7L1588.6 669.5M1585.5 677.7l3.1-3.1" stroke="#858585" stroke-width="1.7" stroke-linecap="round" fill="none"/>
<text x="935.2" y="220.2" font-size="20" text-anchor="end" fill="#262626">0.326</text>
<text x="935.2" y="313.8" font-size="20" text-anchor="end" fill="#262626">0.324</text>
<text x="935.2" y="406.2" font-size="20" text-anchor="end" fill="#262626">0.322</text>
<text x="935.2" y="500.0" font-size="20" text-anchor="end" fill="#262626">0.32</text>
<text x="935.2" y="592.3" font-size="20" text-anchor="end" fill="#262626">0.318</text>
<text x="935.2" y="686.5" font-size="20" text-anchor="end" fill="#262626">0.316</text>
<text x="939.0" y="707.5" font-size="20" text-anchor="middle" fill="#262626">0</text>
<text x="1069.0" y="707.5" font-size="20" text-anchor="middle" fill="#262626">200</text>
<text x="1199.1" y="707.5" font-size="20" text-anchor="middle" fill="#262626">400</text>
<text x="1329.1" y="707.5" font-size="20" text-anchor="middle" fill="#262626">600</text>
<text x="1459.2" y="707.5" font-size="20" text-anchor="middle" fill="#262626">800</text>
<text x="1589.2" y="707.5" font-size="20" text-anchor="middle" fill="#262626">1000</text>
<text x="1259.2" y="745.3" font-size="26" font-weight="bold" text-anchor="middle" textLength="51.4" lengthAdjust="spacingAndGlyphs" fill="#111">p[5]</text>
<text transform="translate(859.4 429.2) rotate(-90)" font-size="26.5" font-weight="bold" text-anchor="middle" fill="#111">etta</text>
<text x="1328.0" y="249.8" font-size="23.4" font-family="Liberation Serif, serif" textLength="199.5" lengthAdjust="spacingAndGlyphs" fill="#111">max pressure for fwh</text>
</svg>
</div>
</div>
</div>
</div>
</body>
</html>
